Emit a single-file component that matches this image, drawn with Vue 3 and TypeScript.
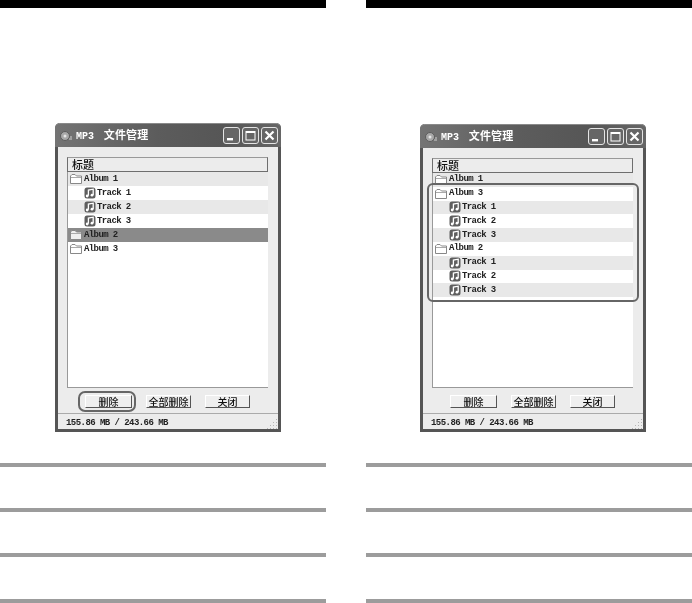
<template>
  <div class="page">
    <section v-for="win in windows" :key="win.id" class="column" :class="win.id">
      <div class="top-bar"></div>
      <div class="window">
        <div class="title-bar">
          <svg class="app-icon" width="14" height="12" viewBox="0 0 14 12">
            <circle cx="6" cy="6" r="4.5" fill="#a8a8a8" stroke="#5c5c5c" />
            <circle cx="6" cy="6" r="1.5" fill="#e6e6e6" />
            <path d="M10 9h3M11 7h2" stroke="#d0d0d0" />
          </svg>
          <span class="title"><span class="latin">MP3</span> 文件管理</span>
          <div class="title-buttons">
            <button class="win-btn">
              <svg width="15" height="15" viewBox="0 0 15 15"><rect x="3" y="10" width="6" height="2.4" fill="#fff" /></svg>
            </button>
            <button class="win-btn">
              <svg width="15" height="15" viewBox="0 0 15 15"><path d="M3 3.5h9M3 4.5h9" stroke="#fff" /><rect x="3" y="3.5" width="9" height="8.5" fill="none" stroke="#fff" /></svg>
            </button>
            <button class="win-btn">
              <svg width="15" height="15" viewBox="0 0 15 15"><path d="M3.5 3.5l8 8M11.5 3.5l-8 8" stroke="#fff" stroke-width="2.2" /></svg>
            </button>
          </div>
        </div>
        <div class="client">
          <div class="list-head">标题</div>
          <div class="list">
            <div
              v-for="(row, i) in win.rows"
              :key="i"
              class="row"
              :class="{ even: i % 2 === 0, selected: row.selected, track: row.track }"
            >
              <svg v-if="row.track" class="icon" width="12" height="12" viewBox="0 0 12 12">
                <rect x="0.5" y="0.5" width="11" height="11" rx="2.5" fill="#5e5e5e" />
                <path d="M4.4 8.8V3L9.2 2.2v5.8" fill="none" stroke="#fff" stroke-width="1.3" />
                <circle cx="3.2" cy="9" r="1.4" fill="#fff" />
                <circle cx="8" cy="8.2" r="1.4" fill="#fff" />
              </svg>
              <svg v-else class="icon" width="12" height="10" viewBox="0 0 12 10">
                <path d="M0.5 9.5V2L2 .5h3L6.5 2h5v7.5z" :fill="row.selected ? '#efefef' : '#fff'" stroke="#888" />
                <path d="M1 3.5h10" stroke="#aaa" />
              </svg>
              <span class="row-text">{{ row.label }}</span>
            </div>
          </div>
          <div class="actions">
            <button class="action wide">删除</button>
            <button class="action">全部删除</button>
            <button class="action">关闭</button>
          </div>
        </div>
        <div class="status">
          <span>155.86 MB / 243.66 MB</span>
          <svg class="grip" width="11" height="11" viewBox="0 0 11 11">
            <path d="M9 1h1M6 4h1M9 4h1M3 7h1M6 7h1M9 7h1M0 10h1M3 10h1M6 10h1M9 10h1" stroke="#b4b4b4" transform="translate(0 .5)" />
          </svg>
        </div>
        <div class="callout" :class="win.callout"></div>
      </div>
      <div class="rules">
        <div v-for="n in 4" :key="n" class="rule"></div>
      </div>
    </section>
  </div>
</template>

<script setup lang="ts">
interface Row {
  label: string
  track?: boolean
  selected?: boolean
}

const tracks: Row[] = [
  { label: "Track 1", track: true },
  { label: "Track 2", track: true },
  { label: "Track 3", track: true },
]

const windows: { id: string; callout: string; rows: Row[] }[] = [
  {
    id: "left",
    callout: "callout-button",
    rows: [
      { label: "Album 1" },
      ...tracks,
      { label: "Album 2", selected: true },
      { label: "Album 3" },
    ],
  },
  {
    id: "right",
    callout: "callout-list",
    rows: [
      { label: "Album 1" },
      { label: "Album 3" },
      ...tracks,
      { label: "Album 2" },
      ...tracks,
    ],
  },
]
</script>

<style scoped>
.page {
  width: 692px;
  height: 603px;
  overflow: hidden;
  background: #fff;
  display: flex;
  gap: 40px;
}
.column {
  width: 326px;
  flex: none;
}
.top-bar {
  height: 8px;
  background: #000;
}
.window {
  position: relative;
  width: 226px;
  height: 309px;
  margin-top: 115px;
  margin-left: 55px;
  display: flex;
  flex-direction: column;
  background: #ececec;
  border: solid #555;
  border-width: 0 3px 3px;
  border-radius: 5px 5px 0 0;
  box-sizing: border-box;
  font-family: "Liberation Mono", monospace;
  color: #222;
  filter: blur(0.3px);
}
.right .window {
  height: 308px;
  margin-top: 116px;
  margin-left: 54px;
}
.title-bar {
  height: 24px;
  margin: 0 -3px;
  padding: 0 3px 0 4px;
  display: flex;
  align-items: center;
  border-radius: 5px 5px 0 0;
  background: linear-gradient(90deg, #747474 0%, #5c5c5c 45%, #565656 75%, #666 100%);
  border-top: 1px solid #8a8a8a;
  box-sizing: border-box;
}
.app-icon {
  flex: none;
}
.title {
  margin-left: 3px;
  margin-bottom: 3px;
  color: #fff;
  font: bold 11px "Noto Sans CJK SC", sans-serif;
  letter-spacing: 0.2px;
  white-space: pre;
}
.title .latin {
  font-family: "Liberation Mono", monospace;
  font-size: 10px;
  letter-spacing: 0;
  margin-right: 7px;
}
.title-buttons {
  margin-left: auto;
  display: flex;
  gap: 2px;
}
.win-btn {
  width: 17px;
  height: 17px;
  padding: 0;
  border: 1px solid #e4e4e4;
  border-radius: 3px;
  background: #666;
  display: flex;
  align-items: center;
  justify-content: center;
}
.client {
  flex: 1;
  min-height: 0;
  padding: 10px 10px 0 9px;
  display: flex;
  flex-direction: column;
}
.list-head {
  height: 15px;
  flex: none;
  padding-left: 4px;
  box-sizing: border-box;
  border: 1px solid #6e6e6e;
  border-top-color: #999;
  background: #ececec;
  color: #111;
  font: 500 11px/13px "Noto Sans CJK SC", sans-serif;
}
.list {
  flex: 1;
  min-height: 0;
  background: #fff;
  border-left: 1px solid #999;
  border-bottom: 1px solid #999;
}
.row {
  height: 14px;
  padding-left: 2px;
  display: flex;
  align-items: center;
  font-size: 9px;
  font-weight: bold;
  letter-spacing: -0.6px;
  background: #fff;
}
.right .row {
  height: 13.8px;
}
.row.even {
  background: #e8e8e8;
}
.row.selected {
  background: #8a8a8a;
}
.row.track {
  padding-left: 16px;
}
.icon {
  flex: none;
}
.row .icon {
  margin-right: 2px;
}
.row.track .icon {
  margin-right: 1px;
}
.row-text {
  margin-top: -1px;
}
.actions {
  flex: none;
  display: flex;
  justify-content: center;
  gap: 14px;
  padding: 7px 0 5px;
}
.action {
  width: 45px;
  height: 13px;
  padding: 0;
  background: #efefef;
  border: 1px solid;
  border-color: #fff #555 #555 #fff;
  color: #111;
  font: 500 10px/11px "Noto Sans CJK SC", sans-serif;
}
.action.wide {
  width: 47px;
}
.status {
  flex: none;
  height: 16px;
  padding: 2px 0 0 8px;
  box-sizing: border-box;
  display: flex;
  align-items: center;
  justify-content: space-between;
  border-top: 1px solid #aaa;
  font-size: 9px;
  font-weight: bold;
  letter-spacing: -0.55px;
}
.grip {
  align-self: flex-end;
}
.callout {
  position: absolute;
  box-sizing: border-box;
  border: 2px solid #666;
  pointer-events: none;
}
.callout-button {
  left: 20px;
  top: 268px;
  width: 58px;
  height: 21px;
  border-radius: 7px;
}
.callout-list {
  left: 4px;
  top: 59px;
  width: 212px;
  height: 119px;
  border-radius: 6px;
}
.rules {
  margin-top: 31px;
}
.rule {
  height: 4px;
  background: #9c9c9c;
  margin-bottom: 41px;
}
.rule:nth-child(3) {
  margin-bottom: 42px;
}
</style>
